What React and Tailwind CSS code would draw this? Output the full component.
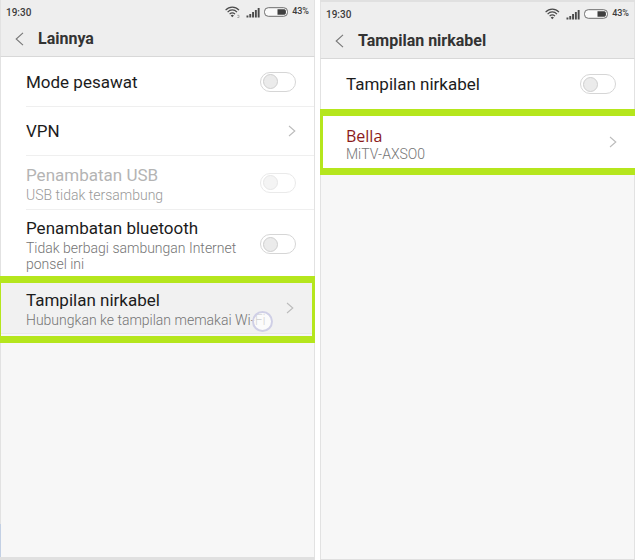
// Two phone screens side by side: the "Lainnya" settings page and the
// wireless display page it leads to.

function StatusBar({ dot }) {
  return (
    <div className="flex h-[22px] items-center px-[5px] pt-0.5 font-medium text-[#3c3c3c]">
      <span className="flex-1 text-[10px]">19:30</span>
      <svg className="mr-1.5" width="15" height="12" viewBox="0 0 15 12" fill="none" stroke="#4a4a4a" strokeWidth="1.2" aria-hidden="true">
        <path d="M0.6 4.1C4.4 0 10.2 0 14 4.1" />
        <path d="M2.6 6.1C5.3 3.2 9.3 3.2 12 6.1" />
        <path d="M4.6 8.1C6.2 6.4 8.4 6.4 10 8.1" />
        <path d="M5.7 9.4L7.3 11.2L8.9 9.4Q7.3 8.2 5.7 9.4Z" fill="#4a4a4a" stroke="none" />
        {dot && <path d="M12.3 9.3H14V11.5H12.3" stroke="#999" strokeWidth="0.8" />}
      </svg>
      <svg className="mr-1" width="14" height="11" viewBox="0 0 14 11" fill="#4a4a4a" aria-hidden="true">
        <rect x="0.5" y="8.5" width="1.9" height="2" />
        <rect x="3.3" y="7" width="1.9" height="3.5" />
        <rect x="6.1" y="5" width="1.9" height="5.5" />
        <rect x="8.9" y="3" width="1.9" height="7.5" />
        <rect x="11.7" y="1" width="1.9" height="9.5" />
      </svg>
      <svg className="mr-1" width="24" height="10" viewBox="0 0 24 10" aria-hidden="true">
        <rect x="0.5" y="0.7" width="23" height="8.6" rx="3.8" fill="#fafafa" stroke="#6c6c6c" />
        <path d="M13.5 2.2H20.5Q22 2.2 22 5T20.5 7.8H13.5Z" fill="#3f3f3f" />
      </svg>
      <span className="text-[9px]">43%</span>
    </div>
  )
}

function Header({ title, dot }) {
  return (
    <header className="border-x border-b border-x-[#e2e2e2] border-b-[#d8d8d8] bg-[#eeeeee]">
      <StatusBar dot={dot} />
      <div className="flex h-[34px] items-center gap-3.5 pl-3.5">
        <button type="button" aria-label="Kembali">
          <svg width="9" height="14" viewBox="0 0 9 14" fill="none" stroke="#777" strokeWidth="1.1">
            <path d="M8 0.8L1.2 7L8 13.2" />
          </svg>
        </button>
        <h1 className="text-[16px] leading-5 font-bold text-[#333]">{title}</h1>
      </div>
    </header>
  )
}

function Chevron() {
  return (
    <svg className="shrink-0" width="8" height="12" viewBox="0 0 8 12" fill="none" stroke="#bbb" strokeWidth="1.1" aria-hidden="true">
      <path d="M1 1L6.8 6L1 11" />
    </svg>
  )
}

function Texts({ title, note, disabled }) {
  return (
    <span className="min-w-0 flex-1">
      <span className={disabled ? 'block text-[17px] leading-6 text-[#b4b4b4]' : 'block text-[17px] leading-6'}>{title}</span>
      {note && (
        <span className={disabled ? 'block text-[14px] leading-4 font-light text-[#999]' : 'block text-[14px] leading-4 font-light text-[#747474]'}>
          {note}
        </span>
      )}
    </span>
  )
}

function ToggleRow({ title, note, disabled }) {
  return (
    <label className="flex flex-1 items-center pr-[18px]">
      <Texts title={title} note={note} disabled={disabled} />
      <input
        type="checkbox"
        disabled={disabled}
        className="flex h-5 w-9 shrink-0 appearance-none items-center rounded-full border border-[#d6d6d6] bg-white px-0.5 before:size-[15px] before:rounded-full before:border before:border-[#cfcfcf] before:bg-[#ebebeb] checked:before:ml-[15px] disabled:opacity-50"
      />
    </label>
  )
}

function LinkRow({ children }) {
  return (
    <a href="#" className="flex flex-1 items-center pr-[18px]">
      {children}
      <Chevron />
    </a>
  )
}

export default function App() {
  return (
    <div className="grid min-h-screen grid-cols-2 gap-[5px] bg-white pr-[5px] font-['Roboto',sans-serif] text-[#1c1c1c]">
      <main className="flex flex-col border-b-[3px] border-[#e0e0e0] bg-[#f7f7f7]">
        <Header title="Lainnya" dot />
        <ul className="border-x border-[#e2e2e2] bg-white pl-[25px]">
          <li className="flex h-[50px] border-b border-[#efefef]">
            <ToggleRow title="Mode pesawat" />
          </li>
          <li className="flex h-[49px] border-b border-[#efefef]">
            <LinkRow><Texts title="VPN" /></LinkRow>
          </li>
          <li className="flex h-[54px] border-b border-[#efefef]">
            <ToggleRow title="Penambatan USB" note="USB tidak tersambung" disabled />
          </li>
          <li className="flex h-[66px] pt-0.5">
            <ToggleRow title="Penambatan bluetooth" note="Tidak berbagi sambungan Internet ponsel ini" />
          </li>
        </ul>
        <div className="relative h-[67px] border-y-[7px] border-r-[3px] border-l border-[#b5e61d] bg-[#f7f7f7]">
          <div className="flex h-[51px] border-b border-[#e9e9e9] bg-[#f1f1f1] pl-[25px]">
            <LinkRow>
              <Texts title="Tampilan nirkabel" note="Hubungkan ke tampilan memakai Wi-Fi" />
            </LinkRow>
          </div>
          {/* touch marker */}
          <span className="absolute right-[39px] bottom-1 size-[21px] rounded-full border-2 border-[#cfcfe6] bg-white/70" />
        </div>
        <div className="flex-1 border-x border-[#e2e2e2]" />
        <div className="h-[33px] border-x border-l-[#c3d0e4] border-r-[#e2e2e2]" />
      </main>

      <main className="flex flex-col border-t-2 border-b border-[#e0e0e0] bg-[#f7f7f7]">
        <Header title="Tampilan nirkabel" />
        <div className="flex h-[50px] border-x border-[#e2e2e2] bg-white pl-[25px]">
          <ToggleRow title="Tampilan nirkabel" />
        </div>
        <div className="flex h-[66px] border-y-[7px] border-l-[3px] border-[#b5e61d] bg-white pl-[23px]">
          <LinkRow>
            <span className="min-w-0 flex-1 pt-1">
              <span className="block font-['Open_Sans',sans-serif] text-[16px] leading-5 text-[#8b1a1a]">Bella</span>
              <span className="block text-[14px] leading-4 font-light text-[#747474]">MiTV-AXSO0</span>
            </span>
          </LinkRow>
        </div>
        <div className="flex-1 border-x border-[#e2e2e2]" />
      </main>
    </div>
  )
}
